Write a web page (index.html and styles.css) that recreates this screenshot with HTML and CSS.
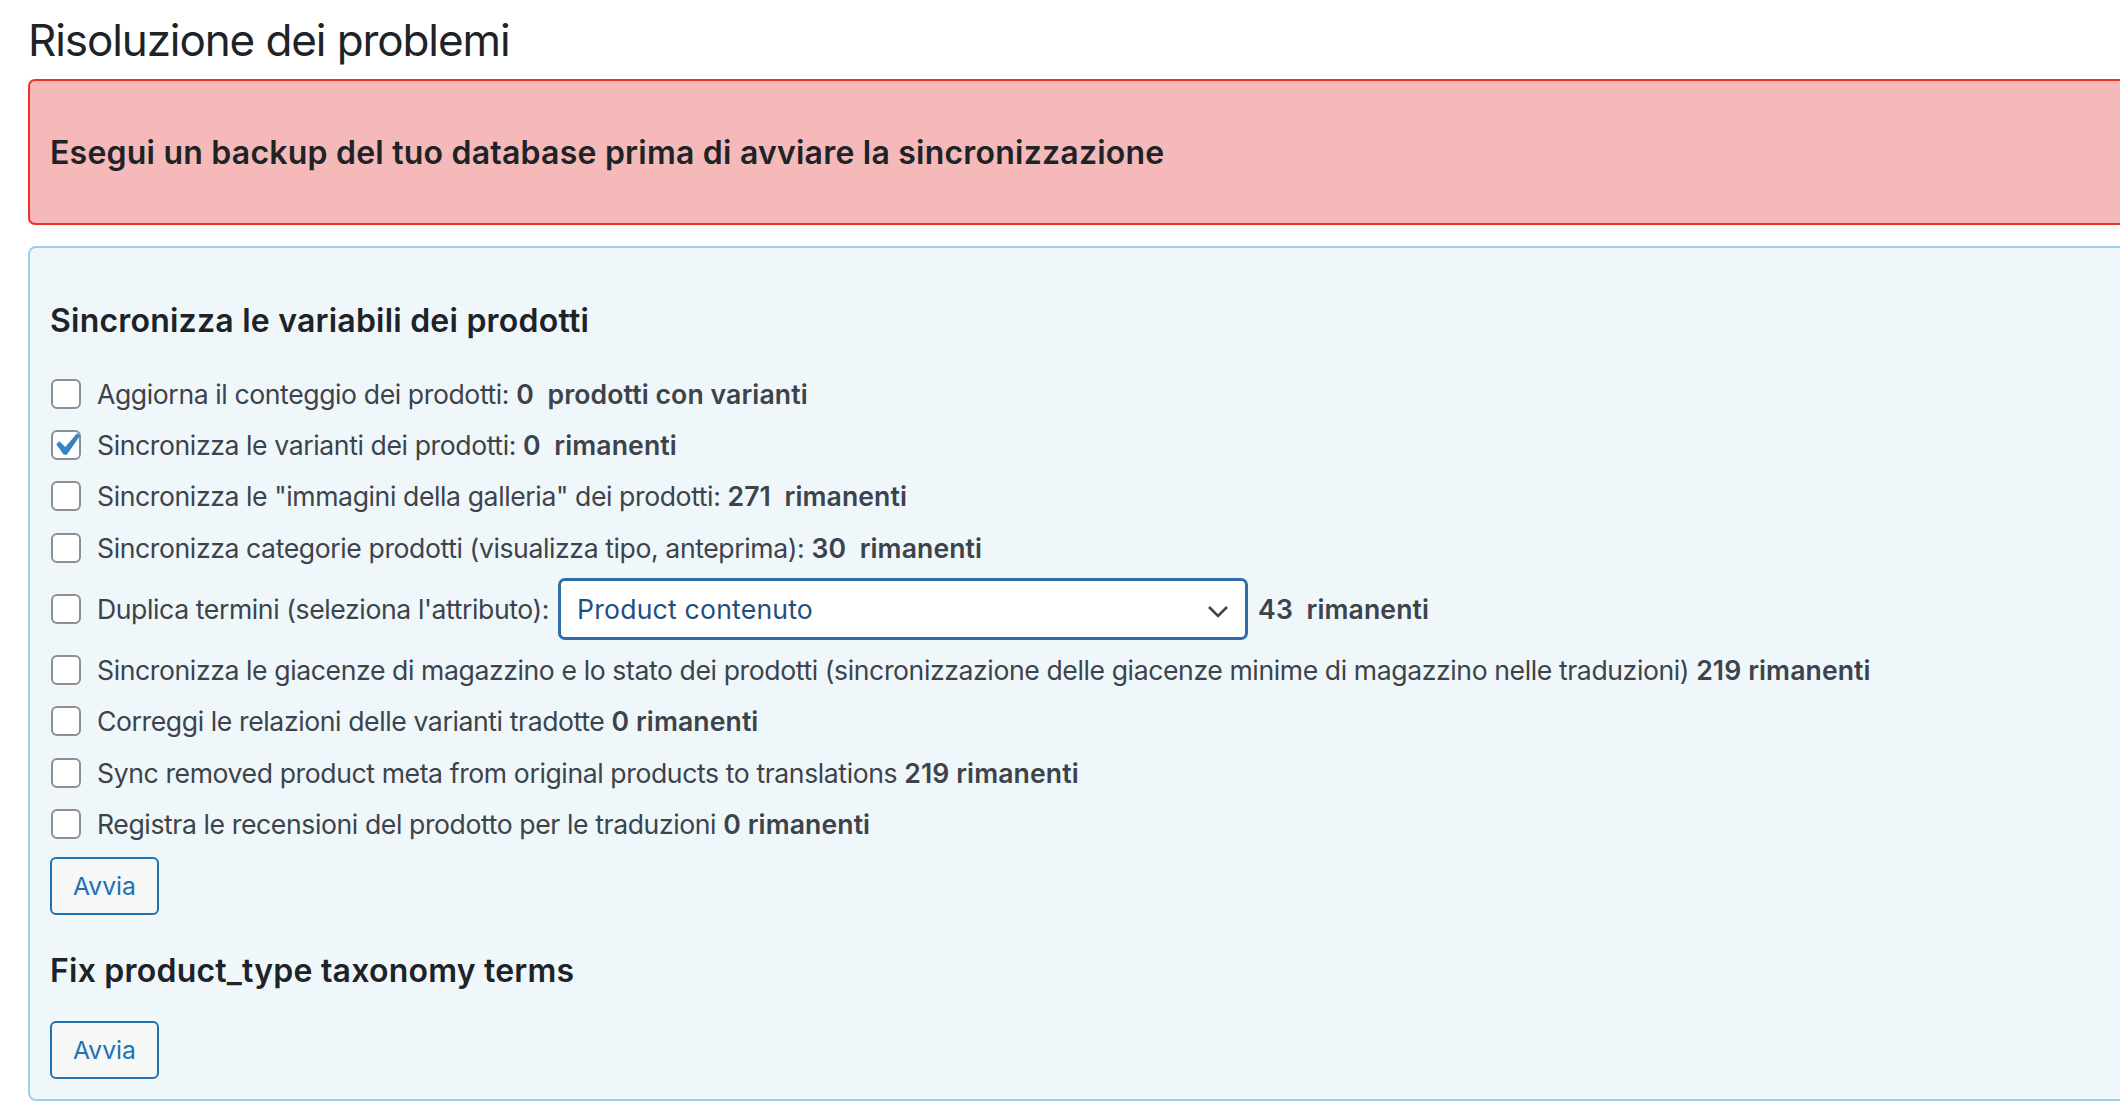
FILE: index.html
```html
<!DOCTYPE html>
<html lang="it">
<head>
<meta charset="UTF-8" />
<title>Risoluzione dei problemi</title>
<link rel="stylesheet" href="styles.css">
</head>
<body>

<div class="wrap">
  <h1 class="page-title">Risoluzione dei problemi</h1>

  <div class="notice notice-error">
    <h2>Esegui un backup del tuo database prima di avviare la sincronizzazione</h2>
  </div>

  <div class="card">
    <h2>Sincronizza le variabili dei prodotti</h2>

    <ul class="task-list">
      <li class="task">
        <span class="checkbox"></span>
        <span class="task-text">Aggiorna il conteggio dei prodotti: <b>0&nbsp; prodotti con varianti</b></span>
      </li>
      <li class="task">
        <span class="checkbox checked">
          <svg viewBox="0 0 20 20"><path d="M14.83 4.89l1.34.94-5.81 8.38H9.02L5.78 9.67l1.34-1.25 2.57 2.4z"/></svg>
        </span>
        <span class="task-text">Sincronizza le varianti dei prodotti: <b>0&nbsp; rimanenti</b></span>
      </li>
      <li class="task">
        <span class="checkbox"></span>
        <span class="task-text">Sincronizza le "immagini della galleria" dei prodotti: <b>271&nbsp; rimanenti</b></span>
      </li>
      <li class="task">
        <span class="checkbox"></span>
        <span class="task-text">Sincronizza categorie prodotti (visualizza tipo, anteprima): <b>30&nbsp; rimanenti</b></span>
      </li>
      <li class="task task-select">
        <span class="checkbox"></span>
        <span class="task-text">Duplica termini (seleziona l'attributo):</span>
        <span class="select">
          <span class="select-value">Product contenuto</span>
          <svg class="chevron" viewBox="0 0 22 13"><path d="M2 2l9 9 9-9"/></svg>
        </span>
        <b>43&nbsp; rimanenti</b>
      </li>
      <li class="task">
        <span class="checkbox"></span>
        <span class="task-text">Sincronizza le giacenze di magazzino e lo stato dei prodotti (sincronizzazione delle giacenze minime di magazzino nelle traduzioni) <b>219 rimanenti</b></span>
      </li>
      <li class="task">
        <span class="checkbox"></span>
        <span class="task-text">Correggi le relazioni delle varianti tradotte <b>0 rimanenti</b></span>
      </li>
      <li class="task">
        <span class="checkbox"></span>
        <span class="task-text">Sync removed product meta from original products to translations <b>219 rimanenti</b></span>
      </li>
      <li class="task">
        <span class="checkbox"></span>
        <span class="task-text">Registra le recensioni del prodotto per le traduzioni <b>0 rimanenti</b></span>
      </li>
    </ul>

    <button class="button">Avvia</button>

    <h2 class="section-title">Fix product_type taxonomy terms</h2>

    <button class="button button-last">Avvia</button>
  </div>
</div>

</body>
</html>
```

FILE: styles.css
```css
html, body {
  margin: 0;
  padding: 0;
  background: #fff;
  overflow: hidden;
}

body {
  font-family: Inter, "Noto Sans", sans-serif;
  color: #3c434a;
}

.wrap {
  padding-left: 28px;
  width: 2300px;
}

.page-title {
  margin: 12px 0 10px 0;
  font-size: 44px;
  font-weight: 400;
  line-height: 57px;
  letter-spacing: -1.1px;
  color: #1d2327;
}

h2 {
  margin: 0;
  font-size: 32px;
  font-weight: 600;
  line-height: 45px;
  letter-spacing: 0.22px;
  color: #1d2327;
}

/* Notice */
.notice {
  border: 2px solid #ee3226;
  border-radius: 7px;
  background: #f4b9b8;
  padding: 49px 20px 48px;
}

/* Card */
.card {
  margin-top: 21px;
  border: 2px solid #9ccfe8;
  border-radius: 8px;
  background: #eff7fb;
  padding: 50px 20px 20px;
}

.task-list {
  list-style: none;
  margin: 25px 0 0 0;
  padding: 0;
}

.task {
  display: flex;
  align-items: center;
  height: 51.3px;
  font-size: 26.6px;
  white-space: nowrap;
}

.task-text {
  letter-spacing: -0.4px;
}

.task b {
  font-weight: 600;
  letter-spacing: 0.1px;
}

.task-select {
  height: 71.3px;
}

.checkbox {
  flex: none;
  width: 30px;
  height: 30px;
  margin: 0 16px 0 1px;
  box-sizing: border-box;
  border: 2px solid #8c8f94;
  border-radius: 6px;
  background: #fff;
  display: flex;
  align-items: center;
  justify-content: center;
}

.checkbox svg {
  flex: none;
  width: 46px;
  height: 46px;
  fill: #3582c4;
}

.select {
  position: relative;
  display: flex;
  align-items: center;
  box-sizing: border-box;
  width: 690px;
  height: 62px;
  margin: 0 10px 0 9px;
  padding: 0 16px;
  border: 3px solid #2f6dab;
  border-radius: 7px;
  background: #fff;
  color: #1f4f80;
  letter-spacing: 0.2px;
}

.chevron {
  position: absolute;
  right: 16px;
  top: 24px;
  width: 22px;
  height: 13px;
  fill: none;
  stroke: #3c434a;
  stroke-width: 2.6;
}

.button {
  display: block;
  margin-top: 7px;
  height: 58px;
  padding: 0 21px;
  font-family: inherit;
  font-size: 24.7px;
  color: #2271b1;
  background: #f6f7f7;
  border: 2px solid #2271b1;
  border-radius: 6px;
  cursor: pointer;
}

.section-title {
  margin-top: 33px;
}

.button-last {
  margin-top: 28px;
}
```
